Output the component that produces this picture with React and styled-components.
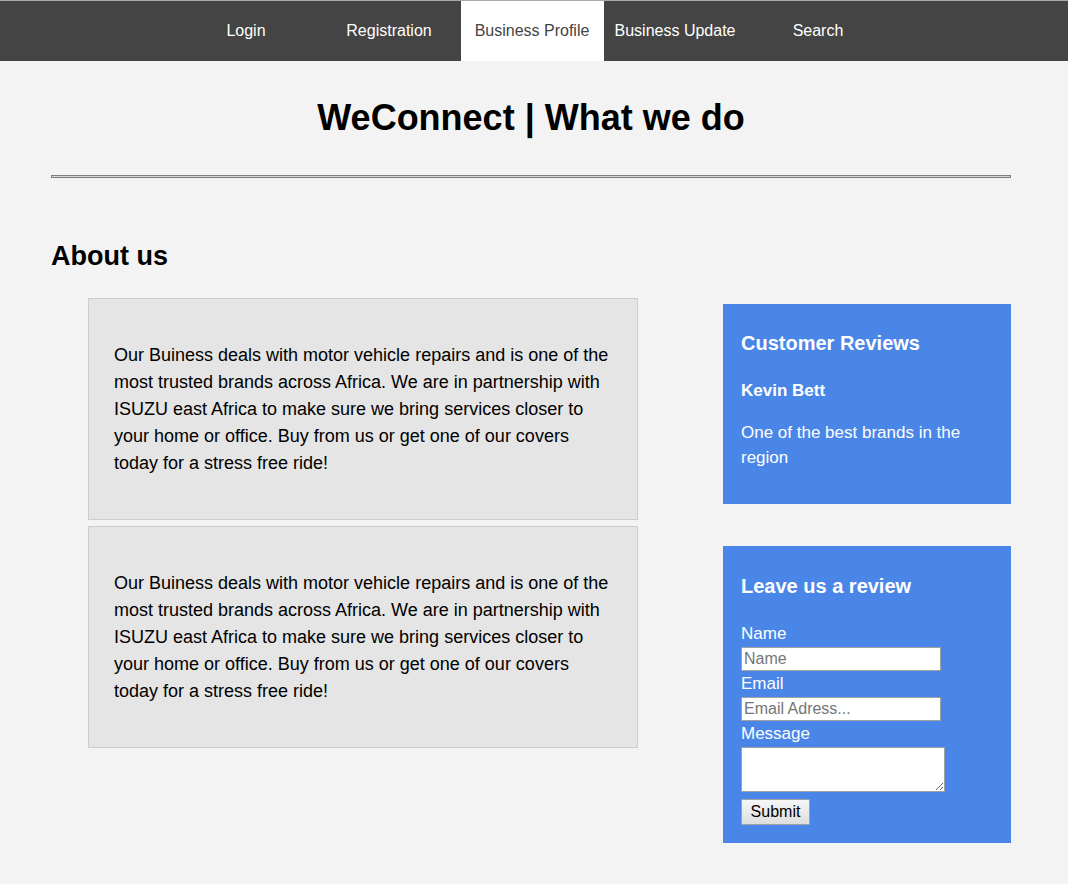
import React from "react"
import styled, { createGlobalStyle } from "styled-components"

const GlobalStyle = createGlobalStyle`
  body {
    margin: 0;
    background: #f3f3f3;
    font-family: "Liberation Sans", Arial, sans-serif;
    color: #000;
  }
`

const Nav = styled.nav`
  background: #444444;
  border-top: 1px solid #a9a9a9;
`

const NavList = styled.ul`
  display: flex;
  justify-content: center;
  margin: 0;
  padding: 0 4px 0 0;
  list-style: none;
`

const NavItem = styled.li`
  width: 143px;
  height: 60px;
  display: flex;
  align-items: center;
  justify-content: center;
  font-size: 16px;
  color: ${(p) => (p.active ? "#444" : "#fff")};
  background: ${(p) => (p.active ? "#fff" : "transparent")};
  white-space: nowrap;
`

const Container = styled.main`
  width: 960px;
  margin-left: 51px;
`

const Title = styled.h1`
  margin: 36px 0 37px;
  text-align: center;
  font-size: 36px;
  line-height: 41px;
  font-weight: 700;
`

const Divider = styled.hr`
  box-sizing: content-box;
  height: 1px;
  margin: 0;
  border: 1px solid #7f7f7f;
  background: #d6d6d6;
`

const SectionTitle = styled.h2`
  margin: 62px 0 26px;
  font-size: 27px;
  line-height: 32px;
  font-weight: 700;
`

const Row = styled.div`
  display: flex;
  justify-content: space-between;
  align-items: flex-start;
`

const LeftColumn = styled.div`
  display: flex;
  flex-direction: column;
  gap: 6px;
  padding-left: 37px;
`

const InfoBox = styled.div`
  box-sizing: border-box;
  width: 550px;
  padding: 25px;
  background: #e5e5e5;
  border: 1px solid #cccccc;

  p {
    margin: 18px 0 17px;
    font-size: 18px;
    line-height: 27px;
  }
`

const RightColumn = styled.aside`
  width: 288px;
  margin-top: 6px;
  display: flex;
  flex-direction: column;
  gap: 42px;
`

const BlueCard = styled.div`
  box-sizing: border-box;
  padding: 18px;
  background: #4a86e8;
  color: #fff;
`

const CardTitle = styled.h3`
  margin: ${(p) => (p.form ? "10px 0 0" : "9px 0 26px")};
  font-size: 20px;
  line-height: 24px;
  font-weight: 700;
`

const Reviewer = styled.h4`
  margin: 0 0 19px;
  font-size: 17px;
  line-height: 20px;
  font-weight: 700;
`

const ReviewText = styled.p`
  margin: 0 0 16px;
  font-size: 17px;
  line-height: 25px;
`

const Form = styled.form`
  display: flex;
  flex-direction: column;
  align-items: flex-start;
  margin-top: 26px;
`

const Label = styled.label`
  font-size: 17px;
  line-height: 20px;
  margin-bottom: 3px;
`

const Input = styled.input`
  box-sizing: border-box;
  width: 200px;
  height: 24px;
  margin: 0 0 3px;
  padding: 1px 2px;
  border: 1px solid #a0a0a0;
  font-family: "Liberation Sans", Arial, sans-serif;
  font-size: 16px;
  background: #fff;

  &::placeholder {
    color: #757575;
  }
`

const TextArea = styled.textarea`
  box-sizing: border-box;
  width: 204px;
  height: 45px;
  margin: 0 0 7px;
  border: 1px solid #a0a0a0;
  font-family: "Liberation Sans", Arial, sans-serif;
`

const SubmitButton = styled.button`
  box-sizing: border-box;
  width: 69px;
  height: 26px;
  padding: 0;
  border: 1px solid #a0a0a0;
  background: linear-gradient(#f6f6f6, #dedede);
  font-family: "Liberation Sans", Arial, sans-serif;
  font-size: 16px;
  color: #000;
`

const aboutText =
  "Our Buiness deals with motor vehicle repairs and is one of the most trusted brands across Africa. We are in partnership with ISUZU east Africa to make sure we bring services closer to your home or office. Buy from us or get one of our covers today for a stress free ride!"

const links = ["Login", "Registration", "Business Profile", "Business Update", "Search"]

const App = () => {
  return (
    <>
      <GlobalStyle />
      <Nav>
        <NavList>
          {links.map((link) => (
            <NavItem key={link} active={link === "Business Profile"}>
              {link}
            </NavItem>
          ))}
        </NavList>
      </Nav>
      <Container>
        <Title>WeConnect | What we do</Title>
        <Divider />
        <SectionTitle>About us</SectionTitle>
        <Row>
          <LeftColumn>
            <InfoBox>
              <p>{aboutText}</p>
            </InfoBox>
            <InfoBox>
              <p>{aboutText}</p>
            </InfoBox>
          </LeftColumn>
          <RightColumn>
            <BlueCard>
              <CardTitle>Customer Reviews</CardTitle>
              <Reviewer>Kevin Bett</Reviewer>
              <ReviewText>One of the best brands in the region</ReviewText>
            </BlueCard>
            <BlueCard>
              <CardTitle form>Leave us a review</CardTitle>
              <Form onSubmit={(e) => e.preventDefault()}>
                <Label>Name</Label>
                <Input placeholder="Name" />
                <Label>Email</Label>
                <Input placeholder="Email Adress..." />
                <Label>Message</Label>
                <TextArea />
                <SubmitButton type="submit">Submit</SubmitButton>
              </Form>
            </BlueCard>
          </RightColumn>
        </Row>
      </Container>
    </>
  )
}

export default App
